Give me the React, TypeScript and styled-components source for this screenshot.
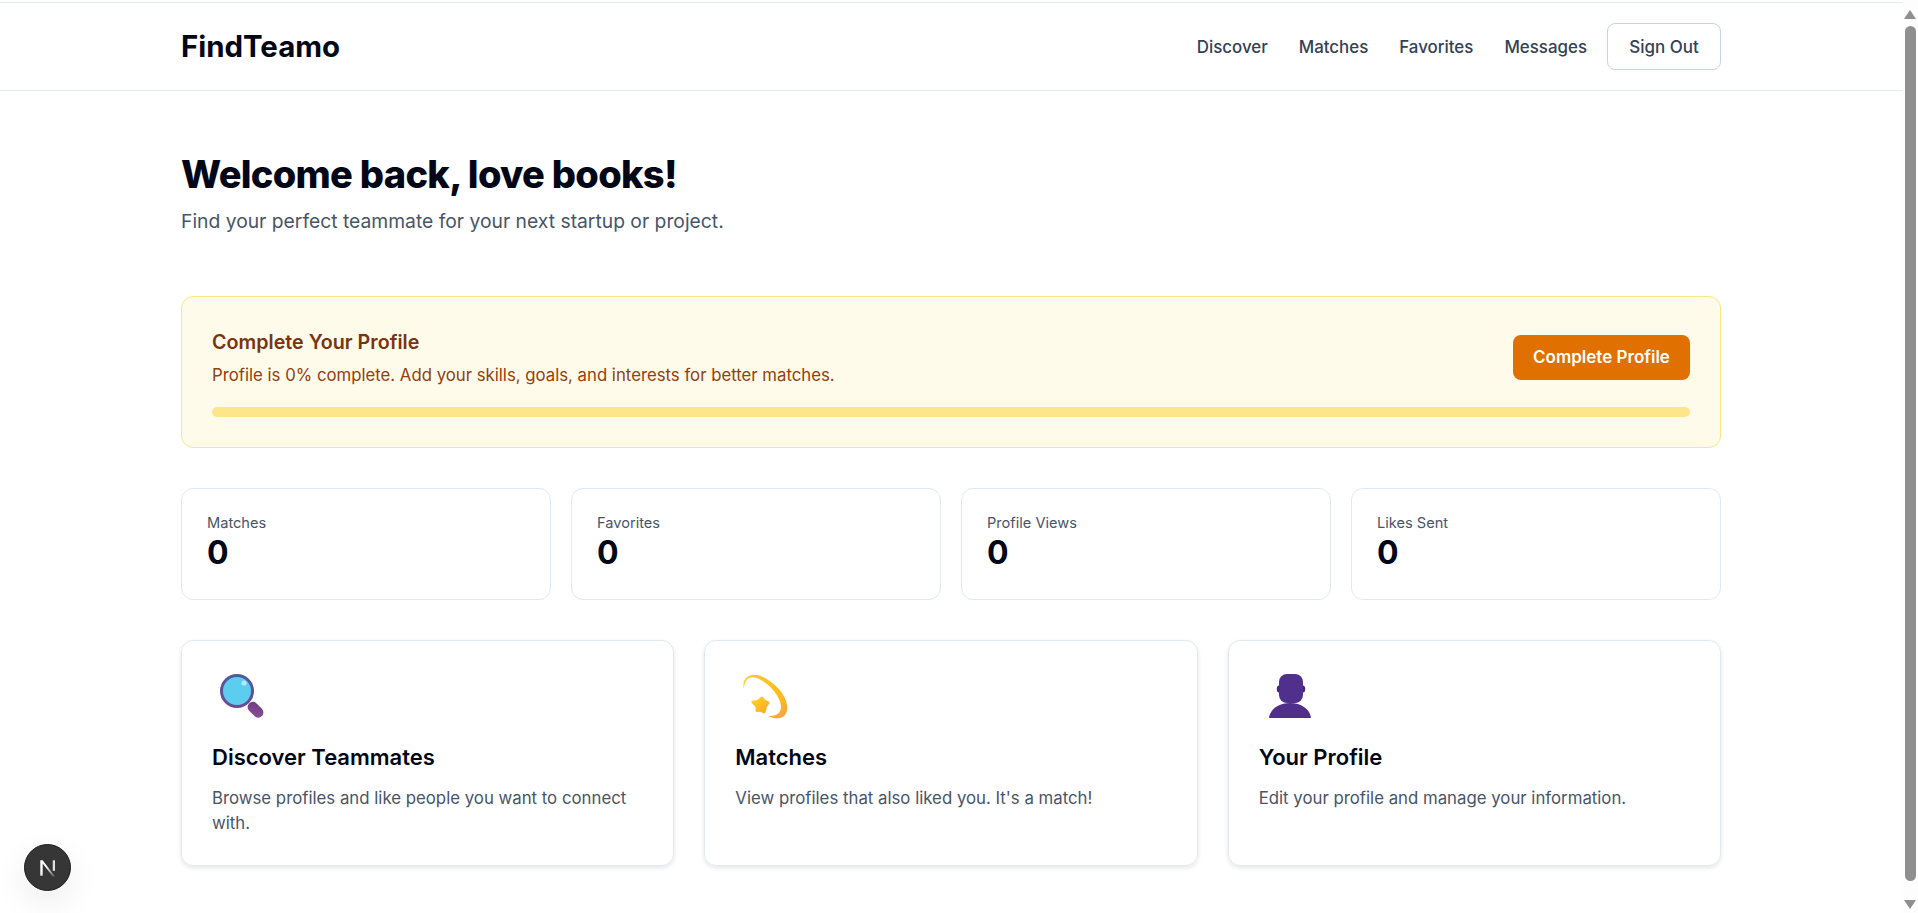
import styled, { createGlobalStyle } from "styled-components";

const GlobalStyle = createGlobalStyle`
  html, body {
    margin: 0;
    height: 100%;
    overflow: hidden;
    background: #fff;
  }
  * {
    box-sizing: border-box;
  }
`;

const Shell = styled.div`
  display: flex;
  height: 100vh;
  overflow: hidden;
  font-family: Inter, "Liberation Sans", sans-serif;
  color: #0f172a;
`;

const Page = styled.div`
  flex: 1;
  min-width: 0;
  padding-top: 2px;
`;

const Nav = styled.nav`
  height: 89px;
  border-top: 1px solid #e2e8f0;
  border-bottom: 1px solid #e2e8f0;
`;

const NavInner = styled.div`
  width: 1540px;
  height: 100%;
  margin-left: 181px;
  display: flex;
  align-items: center;
  justify-content: space-between;
`;

const Logo = styled.div`
  font-size: 29.4px;
  font-weight: 700;
  color: #020617;
`;

const NavLinks = styled.div`
  display: flex;
  align-items: center;
`;

const NavLink = styled.a`
  margin-right: 31px;
  font-size: 16.9px;
  font-weight: 500;
  color: #334155;

  &:last-of-type {
    margin-right: 20px;
  }
`;

const SignOut = styled.button`
  width: 114px;
  height: 47px;
  border: 1px solid #cbd5e1;
  border-radius: 8px;
  background: #fff;
  font: 500 17px Inter, sans-serif;
  color: #334155;
`;

const Main = styled.main`
  width: 1540px;
  margin-left: 181px;
  padding-top: 60px;
`;

const Title = styled.h1`
  margin: 0;
  font-size: 38px;
  line-height: 46px;
  font-weight: 800;
  letter-spacing: -0.7px;
  color: #020617;
`;

const Subtitle = styled.p`
  margin: 11px 0 61px;
  font-size: 19.3px;
  line-height: 27px;
  color: #475569;
`;

const Banner = styled.section`
  height: 152px;
  padding: 30px;
  margin-bottom: 40px;
  background: #fffbeb;
  border: 1px solid #fde68a;
  border-radius: 12px;
`;

const BannerRow = styled.div`
  display: flex;
  align-items: center;
  justify-content: space-between;
`;

const BannerTitle = styled.h3`
  margin: 0 0 6px;
  font-size: 19.7px;
  line-height: 30px;
  font-weight: 600;
  color: #78350f;
`;

const BannerText = styled.p`
  margin: 0;
  font-size: 16.75px;
  line-height: 24px;
  color: #92400e;
`;

const BannerButton = styled.button`
  width: 177px;
  height: 45px;
  border: 0;
  border-radius: 8px;
  background: #e07000;
  color: #fff;
  font: 600 17px Inter, sans-serif;
`;

const Progress = styled.div`
  height: 10px;
  margin-top: 20px;
  border-radius: 5px;
  background: #fde68a;
`;

const Stats = styled.section`
  display: grid;
  grid-template-columns: repeat(4, 1fr);
  gap: 20px;
  margin-bottom: 40px;
`;

const StatCard = styled.div`
  height: 112px;
  padding: 24px 25px;
  border: 1px solid #e2e8f0;
  border-radius: 12px;
`;

const StatLabel = styled.div`
  font-size: 14.6px;
  line-height: 21px;
  color: #475569;
`;

const StatValue = styled.div`
  font-size: 32px;
  line-height: 38px;
  font-weight: 700;
  color: #020617;
`;

const Cards = styled.section`
  display: grid;
  grid-template-columns: repeat(3, 1fr);
  gap: 30px;
`;

const Card = styled.article`
  height: 226px;
  padding: 30px;
  border: 1px solid #e2e8f0;
  border-radius: 12px;
  box-shadow: 0 2px 4px rgba(15, 23, 42, 0.1);
`;

const CardIcon = styled.svg`
  display: block;
  width: 56px;
  height: 48px;
  margin: 1px 0 21px;
  overflow: visible;
`;

const CardTitle = styled.h3`
  margin: 0 0 12px;
  font-size: 22px;
  line-height: 33px;
  font-weight: 600;
  color: #020617;
`;

const CardText = styled.p`
  margin: 0;
  font-size: 16.8px;
  line-height: 25px;
  color: #475569;
`;

const ScrollTrack = styled.div`
  flex: none;
  width: 15px;
  height: 100%;
  position: relative;
  background: #fdfdfd;
`;

const ScrollThumb = styled.div`
  position: absolute;
  top: 26px;
  left: 2px;
  width: 11px;
  height: 855px;
  border-radius: 6px;
  background: #8f8f8f;
`;

const ScrollArrow = styled.div<{ $down?: boolean }>`
  position: absolute;
  left: 1px;
  width: 0;
  height: 0;
  border-left: 6.5px solid transparent;
  border-right: 6.5px solid transparent;
  ${({ $down }) =>
    $down
      ? "bottom: 4px; border-top: 9px solid #8f8f8f;"
      : "top: 10px; border-bottom: 9px solid #8f8f8f;"}
`;

const DevBadge = styled.div`
  position: fixed;
  left: 24px;
  bottom: 22px;
  width: 47px;
  height: 47px;
  display: flex;
  align-items: center;
  justify-content: center;
  border-radius: 50%;
  background: #363636;
  border: 1px solid #1c1c1c;
  box-shadow: 0 0 0 1px rgba(255, 255, 255, 0.5), 0 12px 32px rgba(0, 0, 0, 0.08);
`;

const stats = [
  { label: "Matches", value: 0 },
  { label: "Favorites", value: 0 },
  { label: "Profile Views", value: 0 },
  { label: "Likes Sent", value: 0 },
];

const links = ["Discover", "Matches", "Favorites", "Messages"];

function MagnifierIcon() {
  return (
    <CardIcon viewBox="0 0 56 48">
      <defs>
        <linearGradient id="lens-ring" x1="0" y1="0" x2="0" y2="1">
          <stop offset="0" stopColor="#4d5a9c" />
          <stop offset="1" stopColor="#6f4a92" />
        </linearGradient>
        <linearGradient id="lens-handle" x1="0" y1="0" x2="1" y2="1">
          <stop offset="0" stopColor="#6b3a82" />
          <stop offset="1" stopColor="#8d4f98" />
        </linearGradient>
      </defs>
      <rect x="34.5" y="32.5" width="18" height="10.5" rx="5.25" fill="url(#lens-handle)" transform="rotate(45 43.5 37.75)" />
      <circle cx="25" cy="19" r="15.5" fill="#5ccdee" stroke="url(#lens-ring)" strokeWidth="3" />
      <circle cx="32" cy="11" r="2.6" fill="#b9e6f6" />
    </CardIcon>
  );
}

function DizzyIcon() {
  return (
    <CardIcon viewBox="0 0 56 48">
      <defs>
        <linearGradient id="dizzy-arc" x1="0" y1="0" x2="1" y2="1">
          <stop offset="0" stopColor="#ffc91f" />
          <stop offset="0.7" stopColor="#fdbb22" />
          <stop offset="1" stopColor="#fb9f3c" />
        </linearGradient>
        <linearGradient id="dizzy-star" x1="0" y1="0" x2="1" y2="1">
          <stop offset="0" stopColor="#ffd21f" />
          <stop offset="1" stopColor="#fca92a" />
        </linearGradient>
      </defs>
      <path
        d="M9 17 C6 6 16 -1 28 5 C42 12 54 26 52 38 C51 46 42 49 33 44 C41 44 46 42 46 34 C45 24 34 11 22 6 C14 3 9 8 9 17 Z"
        fill="url(#dizzy-arc)"
      />
      <path
        d="M27 26 L29.5 29.5 L33 31 L30.5 34.5 L29 40 L25 38 L22 38.5 L22 34.5 L18 30 L23 29.5 Z"
        fill="url(#dizzy-star)"
        stroke="url(#dizzy-star)"
        strokeWidth="3"
        strokeLinejoin="round"
      />
    </CardIcon>
  );
}

function BustIcon() {
  return (
    <CardIcon viewBox="0 0 56 48">
      <ellipse cx="20" cy="17" rx="2.2" ry="3.5" fill="#43267a" />
      <ellipse cx="44" cy="17" rx="2.2" ry="3.5" fill="#43267a" />
      <rect x="20" y="2" width="24" height="29" rx="8" fill="#50308c" />
      <path d="M10 46 C11 37 20 31 31 31 C42 31 51 37 52 46 Z" fill="#4f2f8a" />
    </CardIcon>
  );
}

const features = [
  {
    title: "Discover Teammates",
    text: "Browse profiles and like people you want to connect with.",
    icon: <MagnifierIcon />,
  },
  {
    title: "Matches",
    text: "View profiles that also liked you. It's a match!",
    icon: <DizzyIcon />,
  },
  {
    title: "Your Profile",
    text: "Edit your profile and manage your information.",
    icon: <BustIcon />,
  },
];

function App() {
  return (
    <Shell>
      <GlobalStyle />
      <Page>
        <Nav>
          <NavInner>
            <Logo>FindTeamo</Logo>
            <NavLinks>
              {links.map((link) => (
                <NavLink key={link}>{link}</NavLink>
              ))}
              <SignOut>Sign Out</SignOut>
            </NavLinks>
          </NavInner>
        </Nav>
        <Main>
          <Title>Welcome back, love books!</Title>
          <Subtitle>Find your perfect teammate for your next startup or project.</Subtitle>
          <Banner>
            <BannerRow>
              <div>
                <BannerTitle>Complete Your Profile</BannerTitle>
                <BannerText>
                  Profile is 0% complete. Add your skills, goals, and interests for better matches.
                </BannerText>
              </div>
              <BannerButton>Complete Profile</BannerButton>
            </BannerRow>
            <Progress />
          </Banner>
          <Stats>
            {stats.map((stat) => (
              <StatCard key={stat.label}>
                <StatLabel>{stat.label}</StatLabel>
                <StatValue>{stat.value}</StatValue>
              </StatCard>
            ))}
          </Stats>
          <Cards>
            {features.map((feature) => (
              <Card key={feature.title}>
                {feature.icon}
                <CardTitle>{feature.title}</CardTitle>
                <CardText>{feature.text}</CardText>
              </Card>
            ))}
          </Cards>
        </Main>
      </Page>
      <ScrollTrack>
        <ScrollArrow />
        <ScrollThumb />
        <ScrollArrow $down />
      </ScrollTrack>
      <DevBadge>
        <svg width="28" height="28" viewBox="0 0 20 20">
          <defs>
            <linearGradient id="n-fade" x1="0" y1="0" x2="1" y2="1">
              <stop offset="0.4" stopColor="#fff" />
              <stop offset="1" stopColor="#fff" stopOpacity="0.15" />
            </linearGradient>
          </defs>
          <path d="M4.5 15.5 V4.5 H6.2 L15 16 H13.4 L6.2 6.8 V15.5 Z" fill="url(#n-fade)" />
          <rect x="13.4" y="4.5" width="1.6" height="7.5" fill="#fff" opacity="0.85" />
        </svg>
      </DevBadge>
    </Shell>
  );
}

export default App;
